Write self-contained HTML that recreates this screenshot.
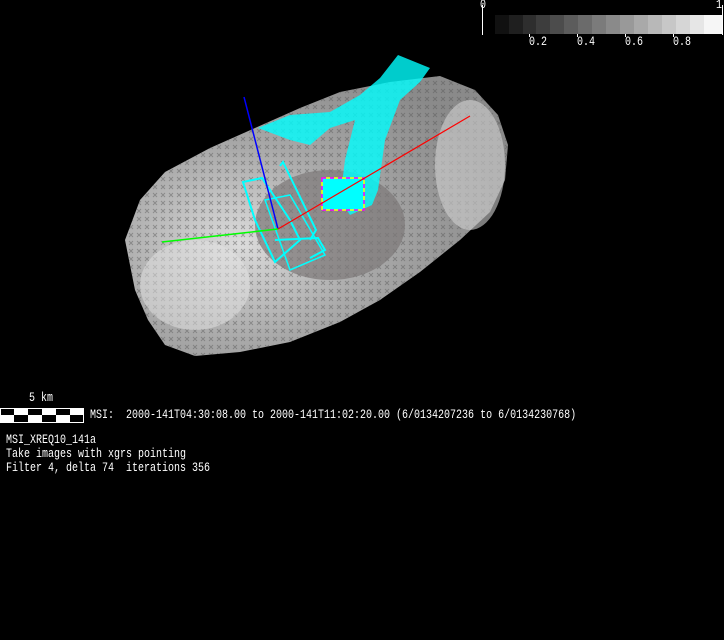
<!DOCTYPE html>
<html><head><style>
html,body{margin:0;padding:0;background:#000;width:724px;height:640px;overflow:hidden}
.t{position:absolute;font-family:"Liberation Mono","DejaVu Sans Mono",monospace;font-size:10px;color:#fff;white-space:pre;line-height:10px;transform:scaleY(1.3);transform-origin:0 0}
</style></head><body>
<svg width="724" height="640" style="position:absolute;left:0;top:0">
<defs>
<radialGradient id="g1" cx="0.3" cy="0.6" r="0.7">
<stop offset="0" stop-color="#dcdcdc"/><stop offset="0.5" stop-color="#a8a8a8"/><stop offset="1" stop-color="#8a8a8a"/>
</radialGradient>
<pattern id="p1" width="8" height="8" patternUnits="userSpaceOnUse">
<path d="M1 1l4 4M5 1l-4 4" stroke="#555" stroke-width="1"/></pattern>
</defs>
<path d="M125 240 L140 200 L165 172 L210 148 L255 128 L300 108 L340 92 L390 82 L440 76 L475 90 L498 115 L508 145 L505 180 L490 212 L460 240 L420 272 L380 300 L340 322 L290 342 L240 352 L195 356 L165 345 L148 320 L135 290 Z" fill="url(#g1)"/>
<path d="M125 240 L140 200 L165 172 L210 148 L255 128 L300 108 L340 92 L390 82 L440 76 L475 90 L498 115 L508 145 L505 180 L490 212 L460 240 L420 272 L380 300 L340 322 L290 342 L240 352 L195 356 L165 345 L148 320 L135 290 Z" fill="url(#p1)" opacity="0.45"/>
<ellipse cx="330" cy="225" rx="75" ry="55" fill="#7c7878" opacity="0.7"/>
<ellipse cx="470" cy="165" rx="35" ry="65" fill="#d0d0d0" opacity="0.6"/>
<ellipse cx="195" cy="285" rx="55" ry="45" fill="#e4e4e4" opacity="0.5"/>
<path d="M398 55 L430 68 L420 82 L400 100 L385 140 L378 190 L372 205 L350 215 L340 200 L345 160 L355 120 L330 128 L310 145 L290 140 L258 128 L290 115 L330 112 L360 95 L380 78 Z" fill="#00ffff" opacity="0.8"/>
<rect x="322" y="178" width="42" height="32" fill="#00ffff" stroke="#ff00ff" stroke-width="1.5" stroke-dasharray="4 4"/>
<rect x="322" y="178" width="42" height="32" fill="none" stroke="#ffff00" stroke-width="1.5" stroke-dasharray="4 4" stroke-dashoffset="4"/>
<g fill="none" stroke="#00ffff" stroke-width="2">
<path d="M243 182 L262 178 L290 220 L300 240 L275 262 L255 220 Z"/>
<path d="M265 200 L290 195 L325 255 L290 270 Z" stroke-width="1.5"/>
<path d="M280 166 L283 162 L316 230 L310 240"/>
<path d="M275 240 L318 238 L325 250 L310 258"/>
</g>
<line x1="244" y1="97" x2="278" y2="229" stroke="#0000ff" stroke-width="1.5"/>
<line x1="278" y1="229" x2="470" y2="116" stroke="#ff0000" stroke-width="1.2"/>
<line x1="162" y1="242" x2="278" y2="229" stroke="#00ff00" stroke-width="1.5"/>
<line x1="482.5" y1="5" x2="482.5" y2="35" stroke="#fff"/>
<g>
<rect x="495" y="15" width="14" height="19" fill="#111"/><rect x="509" y="15" width="14" height="19" fill="#1f1f1f"/>
<rect x="523" y="15" width="13" height="19" fill="#2e2e2e"/><rect x="536" y="15" width="14" height="19" fill="#3d3d3d"/>
<rect x="550" y="15" width="14" height="19" fill="#4c4c4c"/><rect x="564" y="15" width="14" height="19" fill="#5c5c5c"/>
<rect x="578" y="15" width="14" height="19" fill="#6b6b6b"/><rect x="592" y="15" width="14" height="19" fill="#7b7b7b"/>
<rect x="606" y="15" width="14" height="19" fill="#8a8a8a"/><rect x="620" y="15" width="14" height="19" fill="#999"/>
<rect x="634" y="15" width="14" height="19" fill="#a9a9a9"/><rect x="648" y="15" width="14" height="19" fill="#b8b8b8"/>
<rect x="662" y="15" width="14" height="19" fill="#c7c7c7"/><rect x="676" y="15" width="14" height="19" fill="#d6d6d6"/>
<rect x="690" y="15" width="14" height="19" fill="#e6e6e6"/><rect x="704" y="15" width="18" height="19" fill="#f6f6f6"/>
</g>
<line x1="722.5" y1="5" x2="722.5" y2="35" stroke="#fff"/>
<g stroke="#fff"><line x1="529.5" y1="34" x2="529.5" y2="37"/><line x1="577.5" y1="34" x2="577.5" y2="37"/><line x1="625.5" y1="34" x2="625.5" y2="37"/><line x1="673.5" y1="34" x2="673.5" y2="37"/></g>
<rect x="0" y="408" width="84" height="15" fill="#fff"/>
<g fill="#000">
<rect x="1" y="409" width="13" height="6"/><rect x="28" y="409" width="14" height="6"/><rect x="56" y="409" width="14" height="6"/>
<rect x="14" y="415" width="14" height="7"/><rect x="42" y="415" width="14" height="7"/><rect x="70" y="415" width="13" height="7"/>
</g>
</svg>
<div class="t" style="left:480px;top:0">0</div>
<div class="t" style="left:716px;top:0">1</div>
<div class="t" style="left:529px;top:37px">0.2</div>
<div class="t" style="left:577px;top:37px">0.4</div>
<div class="t" style="left:625px;top:37px">0.6</div>
<div class="t" style="left:673px;top:37px">0.8</div>
<div class="t" style="left:29px;top:393px">5 km</div>
<div class="t" style="left:90px;top:410px">MSI:  2000-141T04:30:08.00 to 2000-141T11:02:20.00 (6/0134207236 to 6/0134230768)</div>
<div class="t" style="left:6px;top:435px">MSI_XREQ10_141a</div>
<div class="t" style="left:6px;top:449px">Take images with xgrs pointing</div>
<div class="t" style="left:6px;top:463px">Filter 4, delta 74  iterations 356</div>
</body></html>
